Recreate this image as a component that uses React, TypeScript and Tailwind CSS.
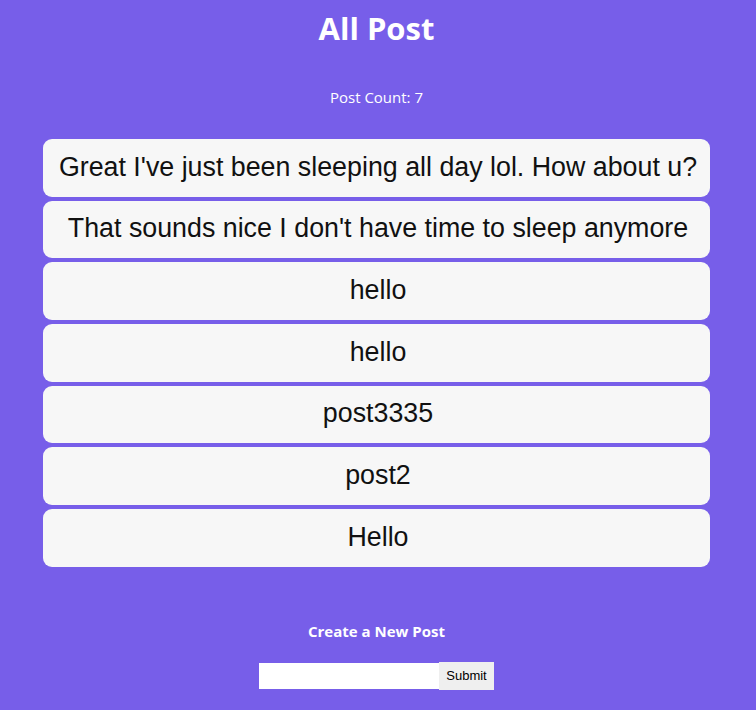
import { useState } from "react";

const posts = [
  "Great I've just been sleeping all day lol. How about u?",
  "That sounds nice I don't have time to sleep anymore",
  "hello",
  "hello",
  "post3335",
  "post2",
  "Hello",
];

export default function App() {
  const [text, setText] = useState("");

  return (
    <div className="min-h-[710px] bg-[#775ee9] pl-[43px] pr-[46px] font-['Open_Sans',sans-serif] text-white">
      <h1 className="pt-[8px] text-center text-[31px] font-bold leading-[40px]">All Post</h1>
      <p className="mt-[39px] text-center text-[15px] leading-[20px]">Post Count: {posts.length}</p>

      <div className="mt-[32px] flex flex-col gap-[4px]">
        {posts.map((post, index) => (
          <div
            key={index}
            className="flex h-[57.67px] items-center justify-center rounded-[9px] bg-[#f7f7f7] pb-[2px] pl-[3px] font-['Liberation_Sans',Arial,sans-serif] text-[26.8px] text-[#111]"
          >
            {post}
          </div>
        ))}
      </div>

      <h2 className="mt-[54px] text-center text-[15px] font-bold leading-[20px]">Create a New Post</h2>

      <form className="mt-[21px] flex justify-center" onSubmit={(event) => event.preventDefault()}>
        <input
          value={text}
          onChange={(event) => setText(event.target.value)}
          className="h-[26px] w-[180px] self-center bg-white px-1 text-[13px] text-black outline-none"
        />
        <button
          type="submit"
          className="h-[28px] bg-[#efefef] px-[7px] font-['Liberation_Sans',Arial,sans-serif] text-[13px] text-black"
        >
          Submit
        </button>
      </form>
    </div>
  );
}
